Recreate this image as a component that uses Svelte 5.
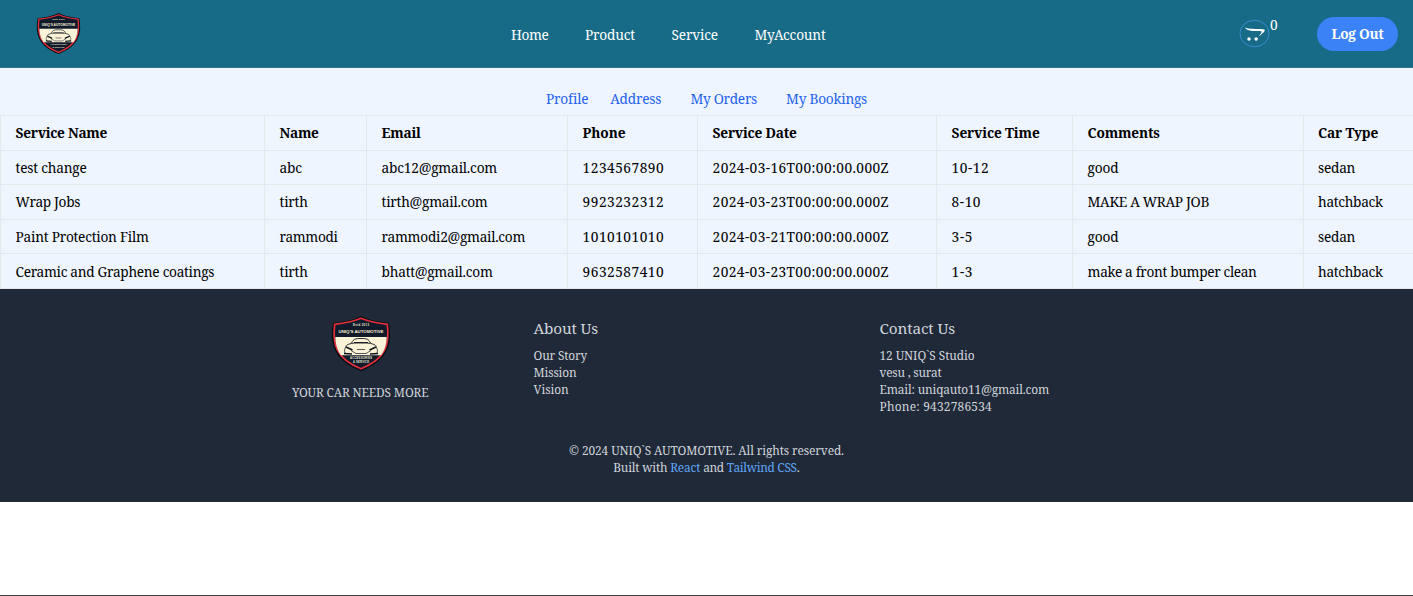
<script lang="ts">
  const headings = ['Service Name', 'Name', 'Email', 'Phone', 'Service Date', 'Service Time', 'Comments', 'Car Type'];
  const headingWidths = [91.5, 39, 39, 43, 84, 88, 72, 60];
  const rows: [string, number][][] = [
    [['test change', 71], ['abc', 22], ['abc12@gmail.com', 115.5], ['1234567890', 81.5], ['2024-03-16T00:00:00.000Z', 176.5], ['10-12', 37.5], ['good', 31], ['sedan', 37]],
    [['Wrap Jobs', 64.5], ['tirth', 28], ['tirth@gmail.com', 106], ['9923232312', 81.5], ['2024-03-23T00:00:00.000Z', 176.5], ['8-10', 29.5], ['MAKE A WRAP JOB', 121.5], ['hatchback', 64.5]],
    [['Paint Protection Film', 133], ['rammodi', 58], ['rammodi2@gmail.com', 143.5], ['1010101010', 81.5], ['2024-03-21T00:00:00.000Z', 176.5], ['3-5', 21.5], ['good', 31], ['sedan', 37]],
    [['Ceramic and Graphene coatings', 198.5], ['tirth', 28], ['bhatt@gmail.com', 111], ['9632587410', 81.5], ['2024-03-23T00:00:00.000Z', 176.5], ['1-3', 21.5], ['make a front bumper clean', 169], ['hatchback', 64.5]]
  ];

  // Tracks a label so that it fills the given width.
  function fit(node: HTMLElement, width: number) {
    const natural = node.getBoundingClientRect().width;
    const spacing = (width - natural) / (node.textContent ?? ' ').length;
    node.style.letterSpacing = spacing + 'px';
  }
</script>

{#snippet label(text: string, width: number)}<span class="label" use:fit={width}>{text}</span>{/snippet}

{#snippet logo()}
  <svg class="logo" viewBox="0 0 60 55" aria-hidden="true">
    <path d="M30 0C38 4 48 6 58 7C61 26 59 44 30 55C1 44 -1 26 2 7C12 6 22 4 30 0Z" fill="#090c14" />
    <path d="M30 2.3C39 6 48 7.5 56.3 8.3C58.6 27 56 42.5 30 52.8C4 42.5 1.4 27 3.7 8.3C12 7.5 21 6 30 2.3Z" fill="#101a2b" stroke="#e5303b" stroke-width="1.7" />
    <path d="M4.3 21H55.7C55.5 29 53.5 34.5 50 39.2H10C6.5 34.5 4.5 29 4.3 21Z" fill="#fbf3d8" />
    <g fill="#f5edd5" font-family="Liberation Sans" font-weight="700" text-anchor="middle">
      <text x="30" y="9.5" font-size="2.8" textLength="16">Estd 2013</text>
      <text x="30" y="17.3" font-size="4" textLength="45" lengthAdjust="spacingAndGlyphs">UNIQ'S AUTOMOTIVE</text>
      <text x="30" y="42.6" font-size="2.7" textLength="22">ACCESSORIES</text>
      <text x="30" y="46.6" font-size="2.7" textLength="16">&amp; SERVICE</text>
    </g>
    <g fill="none" stroke="#10141b">
      <path d="M20.5 27C22.500 23 24 22.500 30 22.500S37.500 23 39.500 27M23 26.500H37M16 29C20 27 23 27 30 27S40 27 44 29" stroke-width=".9" />
      <path d="M15.500 29L13.500 34L14 37.500M44.500 29L46.500 34L46 37.500M20 34.500L25 37.500H35L40 34.500M26 33.500H34" stroke-width=".7" />
      <path d="M15 31L21.500 34M45 31L38.500 34M13 37.500L21 38M47 37.500L39 38" stroke-width="1.600" />
    </g>
  </svg>
{/snippet}

<div class="page">
  <header>
    <div class="brand">{@render logo()}</div>
    <nav>
      {@render label('Home', 37.5)}{@render label('Product', 50)}{@render label('Service', 46.5)}{@render label('MyAccount', 71)}
    </nav>
    <div class="cart">
      <svg viewBox="0 0 32 30" aria-hidden="true">
        <ellipse cx="16" cy="15" rx="15" ry="13.700" fill="none" stroke="#3b8ccc" stroke-width="1" />
        <path d="M6 8.800C10 10.700 18 10.100 25 10.500C28.500 11 26 13.500 20.500 18C23 14.500 24.500 12.900 22 12.500C16 12.300 9 13.300 6 8.800Z" fill="#fff" />
        <circle cx="10.300" cy="20.800" r="1.800" fill="#fff" /><circle cx="17.700" cy="20.800" r="1.800" fill="#fff" />
      </svg>
      <span class="count">0</span>
    </div>
    <button>{@render label('Log Out', 52)}</button>
  </header>

  <main>
    <div class="tabs">
      {@render label('Profile', 42)}{@render label('Address', 51)}{@render label('My Orders', 66.5)}{@render label('My Bookings', 81)}
    </div>
    <table>
      <colgroup><col class="c1" /><col class="c2" /><col class="c3" /><col class="c4" /><col class="c5" /><col class="c6" /><col class="c7" /><col class="c8" /></colgroup>
      <thead><tr>{#each headings as heading, i}<th>{@render label(heading, headingWidths[i])}</th>{/each}</tr></thead>
      <tbody>
        {#each rows as row}<tr>{#each row as cell}<td>{@render label(cell[0], cell[1])}</td>{/each}</tr>{/each}
      </tbody>
    </table>
  </main>

  <footer>
    <div class="columns">
      <section class="about-brand">{@render logo()}<p>{@render label('YOUR CAR NEEDS MORE', 136.5)}</p></section>
      <section class="about">
        <h3>{@render label('About Us', 64.5)}</h3>
        <p>{@render label('Our Story', 53.5)}</p><p>{@render label('Mission', 43)}</p><p>{@render label('Vision', 35)}</p>
      </section>
      <section class="contact">
        <h3>{@render label('Contact Us', 75.5)}</h3>
        <p>{@render label('12 UNIQ`S Studio', 95)}</p><p>{@render label('vesu , surat', 62)}</p>
        <p>{@render label('Email: uniqauto11@gmail.com', 169.5)}</p><p>{@render label('Phone: 9432786534', 112.5)}</p>
      </section>
    </div>
    <div class="legal">
      <p>{@render label('© 2024 UNIQ`S AUTOMOTIVE. All rights reserved.', 275)}</p>
      <p class="built">{@render label('Built with', 54)}<a href="#react">{@render label('React', 30)}</a>{@render label('and', 20.5)}<a href="#tailwind">{@render label('Tailwind CSS', 70)}</a><span>.</span></p>
    </div>
  </footer>
  <div class="edge"></div>
</div>

<style>
  :global(body) { background: #fff; }
  .page { height: 596px; display: flex; flex-direction: column; overflow: hidden; font: 13.700px/20px "Droid Serif", "Noto Serif", Cambria, "DejaVu Serif Condensed", "DejaVu Serif", serif; color: #000; }
  .page * { box-sizing: border-box; }
  .label { display: inline-block; white-space: nowrap; }
  header { height: 68px; flex: none; display: flex; align-items: center; background: #176b87; border-bottom: 1px solid #34798f; color: #fff; }
  .brand { width: 511px; padding-left: 36px; }
  .logo { display: block; width: 45px; height: 41px; }
  nav { display: flex; gap: 36.500px; width: 728px; padding-top: 2px; }
  .cart { display: flex; width: 78px; }
  .cart svg { width: 31px; height: 29px; flex: none; }
  .count { margin-top: -4px; }
  button { width: 81px; height: 34px; padding: 1px 0 0; border: 0; border-radius: 17px; background: #3b82f6; color: #fff; font: inherit; font-weight: 700; }
  main { height: 221px; flex: none; background: #eef5ff; }
  .tabs { height: 47px; padding: 21px 0 0 546px; display: flex; color: #2563eb; }
  .tabs :global(.label:nth-child(1)) { margin-right: 22px; }
  .tabs :global(.label:nth-child(n+2)) { margin-right: 29.100px; }
  table { width: 1413px; height: 174px; table-layout: fixed; border-collapse: collapse; }
  .c1 { width: 264px; } .c2 { width: 102px; } .c3 { width: 201px; } .c4 { width: 130px; }
  .c5 { width: 239px; } .c6 { width: 136px; } .c7 { width: 230.500px; } .c8 { width: 110.500px; }
  th, td { padding: 1px 0 0 14.600px; border: 1px solid #e5e7eb; text-align: left; vertical-align: middle; height: 34.600px; }
  footer { height: 213px; flex: none; padding: 27px 0 0; background: #1f2937; color: #d1d5db; font-size: 11.900px; line-height: 17px; }
  footer p { margin: 0; }
  .columns { display: flex; height: 126px; }
  .about-brand { width: 533.500px; padding-left: 292px; }
  .about-brand .logo { width: 60px; height: 55px; margin: 0 0 13px 39px; }
  .about { width: 346px; }
  h3 { font-size: 15.300px; line-height: 25px; font-weight: 400; margin: 0 0 6px; }
  .legal { text-align: center; }
  .built { display: flex; justify-content: center; gap: 3px; }
  .built > span:last-child { margin-left: -3px; }
  a { color: #60a5fa; text-decoration: none; }
  .edge { margin-top: auto; height: 1px; background: #404040; }
</style>
